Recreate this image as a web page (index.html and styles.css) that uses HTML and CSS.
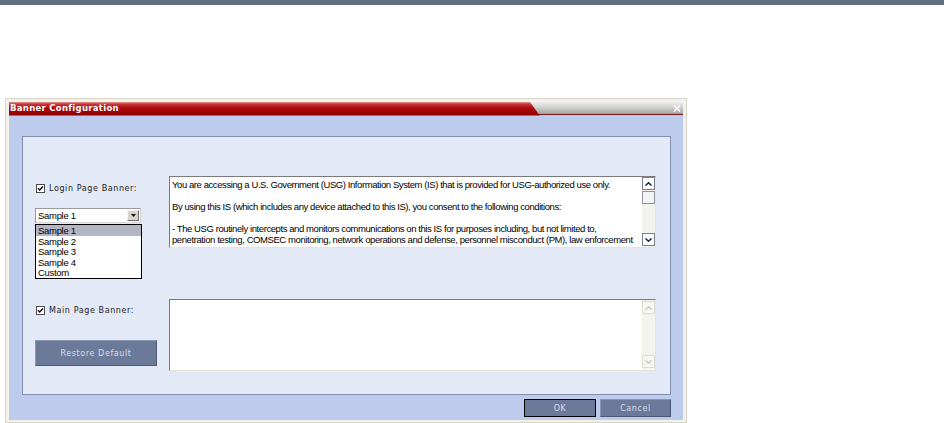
FILE: index.html
```html
<!DOCTYPE html>
<html>
<head>
<meta charset="utf-8">
<link rel="stylesheet" href="styles.css">
</head>
<body>
<div class="topbar"></div>
<div class="window">
  <div class="titlebar">
    <div class="title-red"><span class="title">Banner Configuration</span></div>
    <svg class="close" width="8" height="7" viewBox="0 0 8 7"><path d="M1 0.5 L7 6.5 M7 0.5 L1 6.5" stroke="#fff" stroke-width="1.6" fill="none"/></svg>
  </div>
  <div class="wbody">
    <div class="panel">
      <div class="row">
        <div class="leftcol">
          <div class="check">
            <svg class="box" width="9" height="9" viewBox="0 0 9 9"><rect x="0.5" y="0.5" width="8" height="8" fill="#fff" stroke="#4a4a4a"/><path d="M2 4.2 L3.7 6 L7 2.4" stroke="#111" stroke-width="1.5" fill="none"/></svg>
            <span>Login Page Banner:</span>
          </div>
          <div class="select">
            <span class="select-value">Sample 1</span>
            <span class="select-btn"><svg width="5" height="3" viewBox="0 0 5 3"><path d="M0 0 H5 L2.5 3 Z" fill="#111"/></svg></span>
            <div class="droplist">
              <div class="opt sel">Sample 1</div>
              <div class="opt">Sample 2</div>
              <div class="opt">Sample 3</div>
              <div class="opt">Sample 4</div>
              <div class="opt">Custom</div>
            </div>
          </div>
        </div>
        <div class="textarea">
          <div class="ta-text">
            <div class="ln">You are accessing a U.S. Government (USG) Information System (IS) that is provided for USG-authorized use only.</div>
            <div class="ln"></div>
            <div class="ln">By using this IS (which includes any device attached to this IS), you consent to the following conditions:</div>
            <div class="ln"></div>
            <div class="ln">- The USG routinely intercepts and monitors communications on this IS for purposes including, but not limited to,</div>
            <div class="ln">penetration testing, COMSEC monitoring, network operations and defense, personnel misconduct (PM), law enforcement</div>
          </div>
          <div class="scroll">
            <div class="sbtn"><svg width="7" height="4" viewBox="0 0 7 4"><path d="M0.5 3.5 L3.5 0.8 L6.5 3.5" stroke="#1a2440" stroke-width="1.5" fill="none"/></svg></div>
            <div class="thumb"></div>
            <div class="track"></div>
            <div class="sbtn"><svg width="7" height="4" viewBox="0 0 7 4"><path d="M0.5 0.5 L3.5 3.2 L6.5 0.5" stroke="#1a2440" stroke-width="1.5" fill="none"/></svg></div>
          </div>
        </div>
      </div>
      <div class="row">
        <div class="leftcol">
          <div class="check check2">
            <svg class="box" width="9" height="9" viewBox="0 0 9 9"><rect x="0.5" y="0.5" width="8" height="8" fill="#fff" stroke="#4a4a4a"/><path d="M2 4.2 L3.7 6 L7 2.4" stroke="#111" stroke-width="1.5" fill="none"/></svg>
            <span>Main Page Banner:</span>
          </div>
          <button class="btn restore">Restore Default</button>
        </div>
        <div class="textarea">
          <div class="ta-text"></div>
          <div class="scroll disabled">
            <div class="sbtn"><svg width="7" height="4" viewBox="0 0 7 4"><path d="M0.5 3.5 L3.5 0.8 L6.5 3.5" stroke="#c8c8bc" stroke-width="1.3" fill="none"/></svg></div>
            <div class="track"></div>
            <div class="sbtn"><svg width="7" height="4" viewBox="0 0 7 4"><path d="M0.5 0.5 L3.5 3.2 L6.5 0.5" stroke="#c8c8bc" stroke-width="1.3" fill="none"/></svg></div>
          </div>
        </div>
      </div>
    </div>
    <div class="actions">
      <button class="btn ok">OK</button>
      <button class="btn cancel">Cancel</button>
    </div>
  </div>
</div>
</body>
</html>
```
FILE: styles.css
```css
body {
  margin: 0;
  background: #ffffff;
  font-family: "DejaVu Sans", sans-serif;
}

.topbar {
  height: 5px;
  background: #61707f;
}

.window {
  margin: 93px 0 0 5px;
  width: 682px;
  box-sizing: border-box;
  border: 1px solid #d9d6c9;
  padding: 3px 3px 2px;
  background: #f3f1e8;
}

.titlebar {
  position: relative;
  height: 14px;
  background: linear-gradient(#eeeeee 0, #d2d2d2 5px, #aaaaaa 11px, #9a9a9a 12px, #7a1a1a 12px, #7a1a1a 13px, #b9c4e2 13px);
}

.title-red {
  height: 14px;
  width: 531px;
  clip-path: polygon(0 0, 521px 0, 531px 100%, 0 100%);
  background: linear-gradient(#e49a9a 0, #c83a3a 2px, #ad0a0a 6px, #920000 13px, #b86060 13px);
}

.title {
  display: block;
  color: #ffffff;
  font: bold 8.5px/13px "DejaVu Sans", sans-serif;
  letter-spacing: 0.3px;
  padding-left: 1px;
}

.close {
  position: absolute;
  left: 664px;
  top: 3px;
}

.wbody {
  background: #bdcbec;
  height: 304px;
  box-sizing: border-box;
  padding: 20px 12px 0 13px;
}

.panel {
  height: 259px;
  box-sizing: border-box;
  border: 1px solid #8190ad;
  background: #e4e9f8;
  padding: 39px 0 0 12px;
  display: flex;
  flex-direction: column;
  gap: 51px;
}

.row {
  display: flex;
  gap: 12px;
}

.leftcol {
  width: 122px;
  display: flex;
  flex-direction: column;
  align-items: flex-start;
}

.check {
  display: flex;
  align-items: center;
  gap: 4px;
  margin-top: 8px;
  padding-left: 1px;
  height: 9px;
  font-size: 8px;
  letter-spacing: 0.6px;
  color: #222222;
  white-space: nowrap;
}

.check2 {
  margin-top: 7px;
}

.box {
  flex: none;
}

.select {
  position: relative;
  margin-top: 15px;
  width: 106px;
  height: 15px;
  box-sizing: border-box;
  border: 1px solid;
  border-color: #9a9a9a #d8d8d8 #d8d8d8 #9a9a9a;
  background: #ffffff;
  display: flex;
  align-items: center;
  padding: 0 1px 0 2px;
}

.select-value {
  flex: 1;
  font: 9.5px/13px "Liberation Sans", sans-serif;
  letter-spacing: -0.3px;
  color: #000;
}

.select-btn {
  width: 12px;
  height: 11px;
  box-sizing: border-box;
  border: 1px solid;
  border-color: #f4f4f4 #707070 #707070 #f4f4f4;
  background: #d6d3cc;
  display: flex;
  align-items: center;
  justify-content: center;
}

.droplist {
  position: absolute;
  left: -1px;
  top: 15px;
  width: 107px;
  box-sizing: border-box;
  border: 1px solid #000000;
  background: #ffffff;
  z-index: 2;
}

.opt {
  height: 10.6px;
  font: 9.5px/11px "Liberation Sans", sans-serif;
  letter-spacing: -0.3px;
  padding-left: 2px;
  color: #000;
}

.opt.sel {
  background: #b4b5c4;
}

.textarea {
  width: 487px;
  height: 72px;
  box-sizing: border-box;
  border: 1px solid;
  border-color: #7a7a7a #e6e4d8 #e6e4d8 #7a7a7a;
  background: #ffffff;
  display: flex;
}

.ta-text {
  flex: 1;
  min-width: 0;
  padding: 2px 0 0 2px;
  font: 9.5px/11px "Liberation Sans", sans-serif;
  letter-spacing: -0.42px;
  color: #000000;
  overflow: hidden;
}

.ln {
  height: 11px;
  white-space: nowrap;
}

.scroll {
  width: 13px;
  display: flex;
  flex-direction: column;
  background: #f2f2ee;
  padding-bottom: 1px;
}

.sbtn {
  height: 13px;
  box-sizing: border-box;
  border: 1px solid #7a8090;
  background: #ffffff;
  display: flex;
  align-items: center;
  justify-content: center;
}

.thumb {
  height: 13px;
  margin-top: 1px;
  box-sizing: border-box;
  border: 1px solid #8e94a4;
  background: #f4f4f4;
}

.track {
  flex: 1;
}

.scroll.disabled {
  background: #f4f4ef;
}

.scroll.disabled .sbtn {
  border-color: #dcdcd2;
  background: #f6f6f2;
  margin: 1px 0;
}

.btn {
  font-family: "DejaVu Sans", sans-serif;
  font-size: 8px;
  letter-spacing: 0.6px;
  color: #d9deea;
  background: #6b7a99;
  padding: 0;
  box-sizing: border-box;
  cursor: default;
}

.restore {
  margin-top: 25px;
  width: 122px;
  height: 26px;
  border: 1px solid;
  border-color: #8796b4 #4f5c78 #4f5c78 #8796b4;
}

.actions {
  display: flex;
  justify-content: flex-end;
  gap: 4px;
  margin-top: 4px;
}

.ok {
  width: 72px;
  height: 18px;
  border: 1px solid #000000;
}

.cancel {
  width: 71px;
  height: 18px;
  border: 1px solid;
  border-color: #8796b4 #4a5672 #4a5672 #8796b4;
}
```
